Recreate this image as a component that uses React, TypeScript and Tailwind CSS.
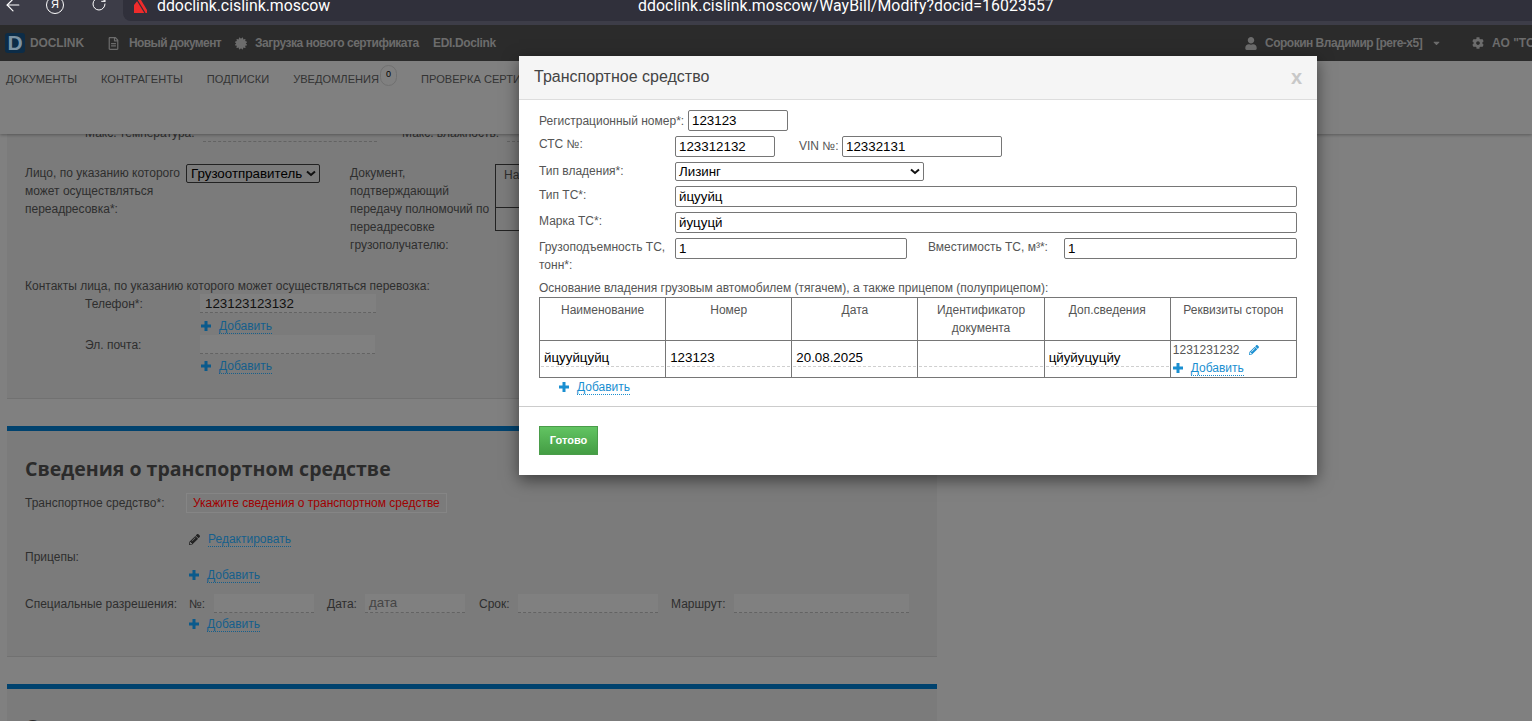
import React from "react";
import { FaUser, FaCog, FaCaretDown, FaPencilAlt, FaRegFileAlt, FaCertificate } from "react-icons/fa";
import { ArrowLeft, RotateCw } from "lucide-react";

function AddLink({ dim = true, className = "" }: { dim?: boolean; className?: string }) {
  return (
    <div className={`flex items-center h-[18px] ${className}`}>
      <svg width="10" height="10" viewBox="0 0 10 10" className={dim ? "text-[#0a5a8c]" : "text-[#1a8fd1]"}>
        <path d="M3.5 0h3v3.5H10v3H6.5V10h-3V6.5H0v-3h3.5z" fill="currentColor" />
      </svg>
      <span className={`ml-[8px] leading-[14px] border-b border-dotted ${dim ? "text-[#155f8c] border-[#155f8c]" : "text-[#1a8fd1] border-[#1a8fd1]"}`}>Добавить</span>
    </div>
  );
}

function DimField({ className = "", children }: { className?: string; children?: React.ReactNode }) {
  return (
    <div className={`h-[19px] bg-[#808080] border-b border-dashed border-[#636363] text-[13.33px] leading-[18px] text-[#111] px-[4px] ${className}`}>{children}</div>
  );
}

function ModalInput({ value, className = "" }: { value: string; className?: string }) {
  return (
    <div className={`h-[21px] border border-[#767676] rounded-[2px] bg-white text-[13.33px] leading-[20px] px-[3px] text-black ${className}`}>{value}</div>
  );
}

const heads = ["Наименование", "Номер", "Дата", "Идентификатор документа", "Доп.сведения", "Реквизиты сторон"];
const cells = ["йцууйцуйц", "123123", "20.08.2025", "", "цйуйуцуцйу"];

export default function App() {
  return (
    <div className="relative w-[1532px] h-[721px] overflow-hidden bg-[#808080] text-[12px] text-[#2e2e2e] font-['Liberation_Sans',Arial,sans-serif]">
      {/* browser chrome */}
      <div className="h-[25px] bg-[#3d3d48] flex relative z-20 overflow-hidden">
        <div className="w-[123px] shrink-0 flex items-center relative">
          <ArrowLeft className="absolute left-[3px] top-[-5px] w-[20px] h-[20px] text-white" strokeWidth={1.4} />
          <div className="absolute left-[46px] top-[-4px] w-[18px] h-[18px] rounded-full border-[1.5px] border-white text-white text-[11px] leading-[15px] text-center">Я</div>
          <RotateCw className="absolute left-[91px] top-[-4px] w-[16px] h-[16px] text-white" strokeWidth={1.5} />
        </div>
        <div className="flex-1 h-[21px] bg-[#30303b] rounded-bl-[8px] relative text-white text-[15.85px] leading-[11px] font-['Roboto',sans-serif]">
          <svg className="absolute left-[9px] top-0" width="16" height="13" viewBox="0 0 16 13">
            <path d="M2 13 L2 5 L6 0 L9 0 L15 10 L15 13 Z" fill="#ef2b2b" />
            <path d="M5 0 L13 13" stroke="#30303b" strokeWidth="1.2" />
          </svg>
          <span className="absolute left-[34px] top-0 whitespace-nowrap">ddoclink.cislink.moscow</span>
          <span className="absolute left-[515px] top-0 whitespace-nowrap tracking-[0.06px]">ddoclink.cislink.moscow/WayBill/Modify?docid=16023557</span>
        </div>
      </div>

      {/* app navbar */}
      <div className="h-[36px] bg-[#2b2b2b] flex items-center relative z-20 text-[#6c6c6c] font-bold whitespace-nowrap">
        <div className="ml-[5px] w-[20px] h-[20px] bg-[#0c2c47] rounded-[3px] text-[#7d93a3] text-[21px] leading-[20px] text-center shrink-0">D</div>
        <span className="ml-[5px] w-[54px] shrink-0 tracking-[-0.1px]">DOCLINK</span>
        <FaRegFileAlt className="ml-[24px] w-[11px] h-[13px] shrink-0" />
        <span className="ml-[10px] w-[92px] shrink-0 tracking-[-0.6px]">Новый документ</span>
        <FaCertificate className="ml-[14px] w-[12px] h-[13px] shrink-0" />
        <span className="ml-[8px] w-[164px] shrink-0 tracking-[-0.47px]">Загрузка нового сертификата</span>
        <span className="ml-[14px] w-[62px] shrink-0 tracking-[-0.35px]">EDI.Doclink</span>
        <FaUser className="ml-[750px] w-[12px] h-[13px] shrink-0" />
        <span className="ml-[8px] w-[158px] shrink-0 tracking-[-0.5px]">Сорокин Владимир [pere-x5]</span>
        <FaCaretDown className="ml-[9px] w-[9px] h-[10px] shrink-0" />
        <FaCog className="ml-[31px] w-[12px] h-[12px] shrink-0" />
        <span className="ml-[8px] shrink-0">АО "ТО</span>
      </div>

      {/* sub nav */}
      <div className="h-[73px] bg-[#808080] relative z-10 shadow-[0_1px_3px_rgba(0,0,0,0.3)] flex items-start pt-[11px] pl-[6px] text-[#333] text-[11.1px] gap-[24px] whitespace-nowrap">
        <span className="leading-[14px]">ДОКУМЕНТЫ</span>
        <span className="leading-[14px]">КОНТРАГЕНТЫ</span>
        <span className="leading-[14px]">ПОДПИСКИ</span>
        <div className="flex items-start">
          <span className="leading-[14px]">УВЕДОМЛЕНИЯ</span>
          <div className="ml-[1px] mt-[-7px] w-[17px] h-[21px] rounded-full border border-[#707070] text-[9px] leading-[17px] text-center text-black">0</div>
        </div>
        <span className="leading-[14px]">ПРОВЕРКА СЕРТИФИКАТА</span>
      </div>

      {/* page body */}
      <div className="ml-[7px] w-[930px]">
        <div className="h-[273px] bg-[#7b7b7b] border-b border-[#717171] pl-[18px] mt-[-8px]">
          <div className="flex h-[16px] items-end">
            <span className="ml-[60px] w-[118px]">Макс. температура:</span>
            <div className="w-[174px] h-[1px] border-b border-dashed border-[#636363]" />
            <span className="ml-[25px] w-[105px]">Макс. влажность:</span>
            <div className="w-[174px] h-[1px] border-b border-dashed border-[#636363]" />
          </div>
          <div className="flex mt-[22px] h-[112px]">
            <div className="w-[161px] leading-[18px]">Лицо, по указанию которого может осуществляться переадресовка*:</div>
            <div className="w-[134px] h-[19px] border border-[#222] rounded-[2px] text-[13.33px] leading-[17px] text-black pl-[4px] flex items-center justify-between pr-[3px] shrink-0">
              <span>Грузоотправитель</span>
              <svg width="10" height="7" viewBox="0 0 10 7"><path d="M1 1.5 L5 5 L9 1.5" fill="none" stroke="#111" strokeWidth="2" /></svg>
            </div>
            <div className="ml-[30px] w-[145px] leading-[18px] shrink-0">Документ, подтверждающий передачу полномочий по переадресовке грузополучателю:</div>
            <div className="w-[40px] h-[67px] border border-[#222] border-r-0 pl-[8px] shrink-0 relative">
              <span className="leading-[20px] block text-[12px]">На</span>
              <div className="absolute left-0 right-0 top-[42px] border-t border-[#222]" />
            </div>
          </div>
          <div className="mt-[1px] leading-[14px] pt-[2px]">Контакты лица, по указанию которого может осуществляться перевозка:</div>
          <div className="flex items-center mt-[1px]">
            <span className="ml-[60px] w-[115px]">Телефон*:</span>
            <DimField className="w-[176px] pl-[5px]! leading-[20px]!">123123123132</DimField>
          </div>
          <AddLink className="ml-[176px] mt-[4px]" />
          <div className="flex items-center">
            <span className="ml-[60px] w-[115px]">Эл. почта:</span>
            <DimField className="w-[175px]" />
          </div>
          <AddLink className="ml-[176px] mt-[3px]" />
        </div>

        <div className="h-[5px] mt-[27px] bg-[#00426e]" />
        <div className="h-[226px] bg-[#7b7b7b] border-b border-[#717171] pl-[18px]">
          <h2 className="pt-[26px] text-[19.55px] leading-[24px] font-bold text-[#2b2b2b] font-['Open_Sans',sans-serif]">Сведения о транспортном средстве</h2>
          <div className="flex items-center mt-[12px]">
            <span className="w-[161px]">Транспортное средство*:</span>
            <div className="h-[20px] w-[261px] border border-[#858585] text-[#a00000] leading-[18px] pl-[6px]">Укажите сведения о транспортном средстве</div>
          </div>
          <div className="flex items-center h-[18px] mt-[17px] ml-[164px]">
            <FaPencilAlt className="w-[11px] h-[11px] text-[#222]" />
            <span className="ml-[8px] leading-[14px] text-[#155f8c] border-b border-dotted border-[#155f8c]">Редактировать</span>
          </div>
          <div className="leading-[18px]">Прицепы:</div>
          <AddLink className="ml-[164px]" />
          <div className="flex items-center mt-[10px]">
            <span className="w-[164px]">Специальные разрешения:</span>
            <span className="w-[25px]">№:</span>
            <DimField className="w-[100px]" />
            <span className="ml-[13px] w-[38px]">Дата:</span>
            <DimField className="w-[100px] text-[#454545]!">дата</DimField>
            <span className="ml-[14px] w-[39px]">Срок:</span>
            <DimField className="w-[140px]" />
            <span className="ml-[13px] w-[63px]">Маршрут:</span>
            <DimField className="w-[175px]" />
          </div>
          <AddLink className="ml-[164px] mt-[2px]" />
        </div>

        <div className="h-[5px] mt-[27px] bg-[#00426e]" />
        <div className="h-[40px] bg-[#7b7b7b] pl-[18px]">
          <h2 className="pt-[26px] text-[19.55px] leading-[24px] font-bold text-[#2b2b2b] font-['Open_Sans',sans-serif]">Сведения</h2>
        </div>
      </div>

      {/* modal */}
      <div className="absolute z-30 left-[519px] top-[56px] w-[798px] h-[419px] bg-white shadow-[0_5px_15px_rgba(0,0,0,0.5)] text-[#555]">
        <div className="h-[44px] bg-[#f5f5f5] border-b border-[#dddddd] flex items-center justify-between pl-[15px] pr-[15px] pb-[2px]">
          <span className="text-[16px] text-[#444]">Транспортное средство</span>
          <span className="text-[20px] font-bold text-[#c8c8c8]">x</span>
        </div>
        <div className="pl-[20px] pr-[20px]">
          <div className="flex items-center mt-[10px]">
            <span className="w-[149px]">Регистрационный номер*:</span>
            <ModalInput value="123123" className="w-[100px]" />
          </div>
          <div className="flex mt-[5px]">
            <span className="w-[136px] leading-[16px]">СТС №:</span>
            <ModalInput value="123312132" className="w-[100px]" />
            <span className="ml-[24px] w-[43px] leading-[20px]">VIN №:</span>
            <ModalInput value="12332131" className="w-[160px]" />
          </div>
          <div className="flex mt-[5px]">
            <span className="w-[136px] leading-[18px]">Тип владения*:</span>
            <div className="w-[249px] h-[19px] border border-[#767676] rounded-[2px] text-[13.33px] leading-[17px] text-black pl-[3px] pr-[3px] flex items-center justify-between">
              <span>Лизинг</span>
              <svg width="10" height="7" viewBox="0 0 10 7"><path d="M1 1.5 L5 5 L9 1.5" fill="none" stroke="#111" strokeWidth="2" /></svg>
            </div>
          </div>
          <div className="flex mt-[5px]">
            <span className="w-[136px] leading-[18px]">Тип ТС*:</span>
            <ModalInput value="йцууйц" className="flex-1" />
          </div>
          <div className="flex mt-[5px]">
            <span className="w-[136px] leading-[18px]">Марка ТС*:</span>
            <ModalInput value="йуцуцй" className="flex-1" />
          </div>
          <div className="flex mt-[5px]">
            <span className="w-[136px] leading-[18px] pr-[4px] shrink-0">Грузоподъемность ТС, тонн*:</span>
            <ModalInput value="1" className="w-[232px]" />
            <span className="ml-[21px] w-[136px] leading-[18px]">Вместимость ТС, м³*:</span>
            <ModalInput value="1" className="flex-1" />
          </div>
          <div className="mt-[7px] leading-[14px]">Основание владения грузовым автомобилем (тягачем), а также прицепом (полуприцепом):</div>
          <table className="mt-[2px] w-[758px] table-fixed border-collapse border border-[#767676]">
            <tbody>
              <tr className="h-[43px]">
                {heads.map((h) => (
                  <td key={h} className="border border-[#767676] align-top text-center leading-[18px] pt-[3px] px-[8px]">{h}</td>
                ))}
              </tr>
              <tr className="h-[37px]">
                {cells.map((c, i) => (
                  <td key={i} className="border border-[#767676] align-top p-0">
                    <div className="mx-[1px] mt-[7px] h-[19px] border-b border-dashed border-[#cfcfcf] text-[13.33px] leading-[19px] text-black pl-[3px]">{c}</div>
                  </td>
                ))}
                <td className="border border-[#767676] align-top pl-[2px]">
                  <div className="flex items-center h-[18px]">
                    <span>1231231232</span>
                    <FaPencilAlt className="ml-[9px] w-[10px] h-[10px] text-[#1a8fd1]" />
                  </div>
                  <AddLink dim={false} />
                </td>
              </tr>
            </tbody>
          </table>
          <AddLink dim={false} className="ml-[20px]" />
        </div>
        <div className="mt-[10px] border-t border-[#cccccc]" />
        <div className="pl-[20px] pt-[19px]">
          <div className="w-[59px] h-[29px] border border-[#4a9c4a] bg-gradient-to-b from-[#62c462] to-[#449d44] text-white font-bold text-[11px] leading-[27px] text-center">Готово</div>
        </div>
      </div>
    </div>
  );
}
